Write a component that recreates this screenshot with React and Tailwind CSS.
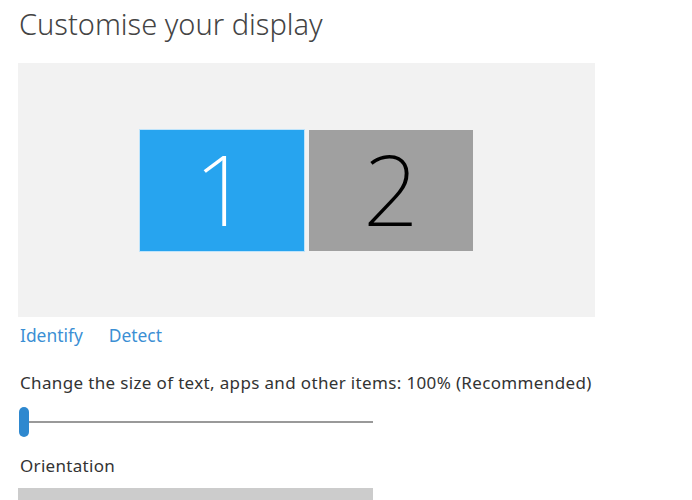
import React from 'react';

const Monitor = ({ n, active }) => (
  <div
    className={`w-[164px] h-[121px] flex items-center justify-center ${
      active ? 'bg-[#27a4ef] text-white outline outline-1 outline-[#bfe4fb]' : 'bg-[#a0a0a0] text-black'
    }`}
  >
    <span className="text-[98px] font-extralight leading-none mt-[-4px]">{n}</span>
  </div>
);

const App = () => {
  return (
    <div className="w-[692px] h-[500px] bg-white overflow-hidden pl-[18px] text-[#333]" style={{ fontFamily: '"Noto Sans", "Open Sans", sans-serif' }}>
      <h1 className="text-[29px] font-light text-[#444] pt-[5px] pl-[1px] leading-[38px]">Customise your display</h1>

      <div className="mt-[20px] w-[577px] h-[254px] bg-[#f2f2f2] flex items-center justify-center gap-[5px]">
        <Monitor n="1" active />
        <Monitor n="2" />
      </div>

      <div className="flex gap-[26px] pl-[2px] mt-[6px] text-[17.4px] text-[#3b8fd4] leading-[24px]">
        <span>Identify</span>
        <span>Detect</span>
      </div>

      <p className="pl-[2px] mt-[25px] text-[17px] leading-[22px] tracking-[0.35px]">
        Change the size of text, apps and other items: 100% (Recommended)
      </p>

      <div className="flex items-center mt-[13px] h-[30px] pl-[1px]">
        <div className="w-[10px] h-[30px] rounded-full bg-[#2e88cf]" />
        <div className="w-[344px] h-[2px] bg-[#999]" />
      </div>

      <p className="pl-[2px] mt-[18px] text-[17px] leading-[22px] tracking-[0.3px]">Orientation</p>

      <div className="mt-[11px] w-[355px] h-[32px] bg-[#cccccc]" />
    </div>
  );
};

export default App;
